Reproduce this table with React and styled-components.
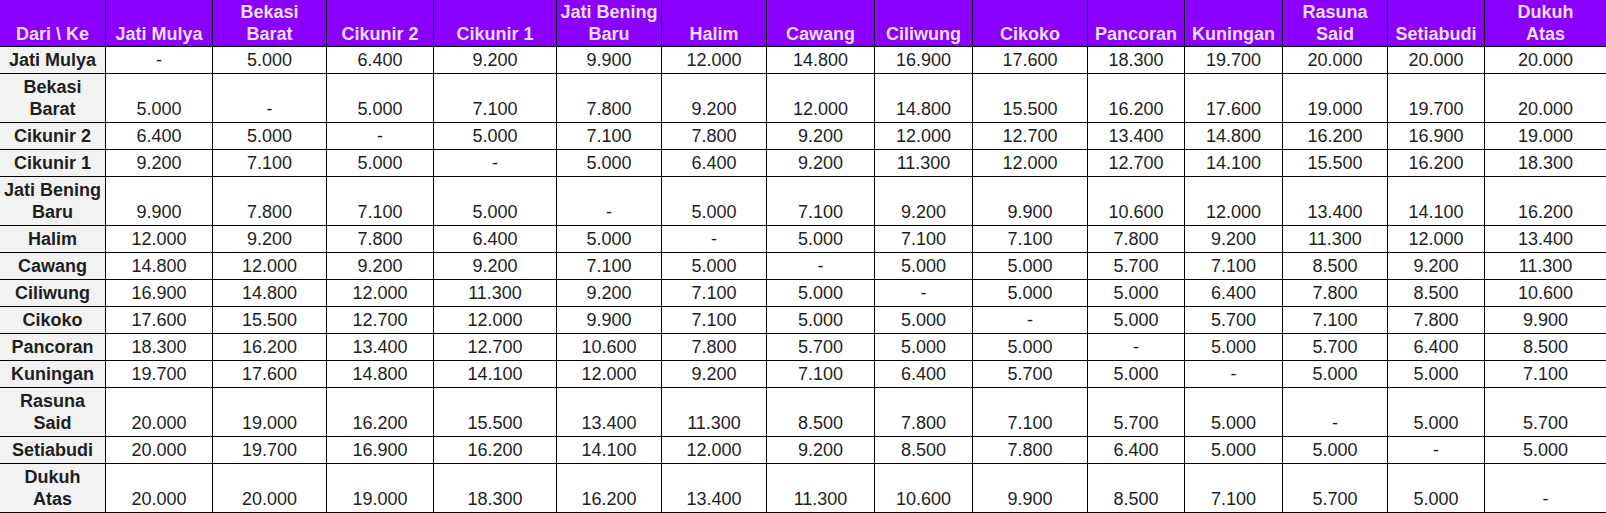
import React from "react";
import styled, { createGlobalStyle, css } from "styled-components";

const Global = createGlobalStyle`
  html, body { margin: 0; padding: 0; background: #ffffff; }
  body { font-family: "Liberation Sans", Arial, sans-serif; }
`;

const stations = [
  "Jati Mulya",
  "Bekasi\nBarat",
  "Cikunir 2",
  "Cikunir 1",
  "Jati Bening\nBaru",
  "Halim",
  "Cawang",
  "Ciliwung",
  "Cikoko",
  "Pancoran",
  "Kuningan",
  "Rasuna\nSaid",
  "Setiabudi",
  "Dukuh\nAtas",
];

const fares = [
  ["-", "5.000", "6.400", "9.200", "9.900", "12.000", "14.800", "16.900", "17.600", "18.300", "19.700", "20.000", "20.000", "20.000"],
  ["5.000", "-", "5.000", "7.100", "7.800", "9.200", "12.000", "14.800", "15.500", "16.200", "17.600", "19.000", "19.700", "20.000"],
  ["6.400", "5.000", "-", "5.000", "7.100", "7.800", "9.200", "12.000", "12.700", "13.400", "14.800", "16.200", "16.900", "19.000"],
  ["9.200", "7.100", "5.000", "-", "5.000", "6.400", "9.200", "11.300", "12.000", "12.700", "14.100", "15.500", "16.200", "18.300"],
  ["9.900", "7.800", "7.100", "5.000", "-", "5.000", "7.100", "9.200", "9.900", "10.600", "12.000", "13.400", "14.100", "16.200"],
  ["12.000", "9.200", "7.800", "6.400", "5.000", "-", "5.000", "7.100", "7.100", "7.800", "9.200", "11.300", "12.000", "13.400"],
  ["14.800", "12.000", "9.200", "9.200", "7.100", "5.000", "-", "5.000", "5.000", "5.700", "7.100", "8.500", "9.200", "11.300"],
  ["16.900", "14.800", "12.000", "11.300", "9.200", "7.100", "5.000", "-", "5.000", "5.000", "6.400", "7.800", "8.500", "10.600"],
  ["17.600", "15.500", "12.700", "12.000", "9.900", "7.100", "5.000", "5.000", "-", "5.000", "5.700", "7.100", "7.800", "9.900"],
  ["18.300", "16.200", "13.400", "12.700", "10.600", "7.800", "5.700", "5.000", "5.000", "-", "5.000", "5.700", "6.400", "8.500"],
  ["19.700", "17.600", "14.800", "14.100", "12.000", "9.200", "7.100", "6.400", "5.700", "5.000", "-", "5.000", "5.000", "7.100"],
  ["20.000", "19.000", "16.200", "15.500", "13.400", "11.300", "8.500", "7.800", "7.100", "5.700", "5.000", "-", "5.000", "5.700"],
  ["20.000", "19.700", "16.900", "16.200", "14.100", "12.000", "9.200", "8.500", "7.800", "6.400", "5.000", "5.000", "-", "5.000"],
  ["20.000", "20.000", "19.000", "18.300", "16.200", "13.400", "11.300", "10.600", "9.900", "8.500", "7.100", "5.700", "5.000", "-"],
];

const colWidths = [105, 107, 114, 107, 123, 105, 105, 108, 98, 115, 97, 98, 105, 97, 122];

const Table = styled.table`
  border-collapse: collapse;
  table-layout: fixed;
  width: 1607px;
  margin: -1px 0 0 -1px;
`;

const cellBase = css`
  font-family: "Liberation Sans", Arial, sans-serif;
  font-size: 18px;
  line-height: 22px;
  text-align: center;
  vertical-align: bottom;
  border: 1px solid #000;
  white-space: pre-line;
  overflow: hidden;
`;

const HeadCell = styled.th`
  ${cellBase}
  background: #8a00ff;
  color: #f4dfff;
  font-weight: bold;
  padding: 1px 1px 1px;
`;

const RowLabel = styled.th`
  ${cellBase}
  background: #f2f2f2;
  color: #1e1e1e;
  font-weight: bold;
  padding: 2px 1px 2px;
`;

const Cell = styled.td`
  ${cellBase}
  background: #fff;
  color: #1e1e1e;
  font-weight: normal;
  padding: 2px 1px 2px;
`;

export default function App() {
  return (
    <>
      <Global />
      <Table>
        <colgroup>
          {colWidths.map((w, i) => (
            <col key={i} style={{ width: `${i === 0 ? w + 1 : w}px` }} />
          ))}
        </colgroup>
        <thead>
          <tr>
            <HeadCell>Dari \ Ke</HeadCell>
            {stations.map((s) => (
              <HeadCell key={s}>{s}</HeadCell>
            ))}
          </tr>
        </thead>
        <tbody>
          {stations.map((s, r) => (
            <tr key={s}>
              <RowLabel>{s}</RowLabel>
              {fares[r].map((v, c) => (
                <Cell key={c}>{v}</Cell>
              ))}
            </tr>
          ))}
        </tbody>
      </Table>
    </>
  );
}
